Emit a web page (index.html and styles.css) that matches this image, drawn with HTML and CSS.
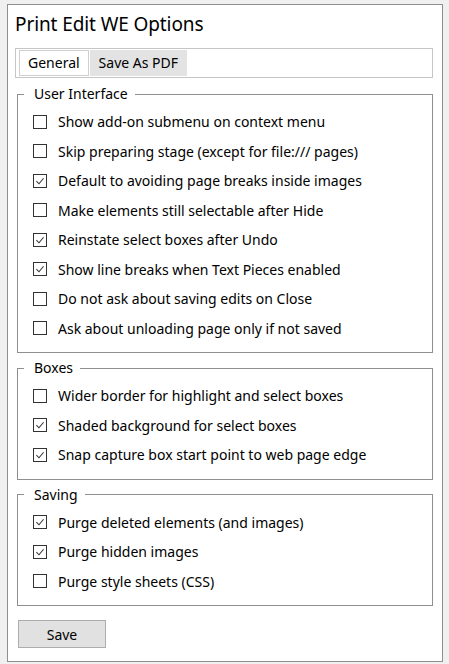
FILE: index.html
```html
<!DOCTYPE html>
<html>
<head>
<meta charset="utf-8">
<title>Print Edit WE Options</title>
<link rel="stylesheet" href="styles.css">
</head>
<body>
<div class="panel">
  <h1 class="title">Print Edit WE Options</h1>
  <div class="tabbar">
    <div class="tab tab-active">General</div>
    <div class="tab">Save As PDF</div>
  </div>

  <fieldset class="group group-first">
    <legend class="legend">User Interface</legend>
    <div class="row"><span class="cb"></span><span class="label">Show add-on submenu on context menu</span></div>
    <div class="row"><span class="cb"></span><span class="label">Skip preparing stage (except for file:/// pages)</span></div>
    <div class="row"><span class="cb"><svg viewBox="0 0 14 14"><path d="M2.8 7.2 L5.8 10.2 L11.2 3.8"/></svg></span><span class="label">Default to avoiding page breaks inside images</span></div>
    <div class="row"><span class="cb"></span><span class="label">Make elements still selectable after Hide</span></div>
    <div class="row"><span class="cb"><svg viewBox="0 0 14 14"><path d="M2.8 7.2 L5.8 10.2 L11.2 3.8"/></svg></span><span class="label">Reinstate select boxes after Undo</span></div>
    <div class="row"><span class="cb"><svg viewBox="0 0 14 14"><path d="M2.8 7.2 L5.8 10.2 L11.2 3.8"/></svg></span><span class="label">Show line breaks when Text Pieces enabled</span></div>
    <div class="row"><span class="cb"></span><span class="label">Do not ask about saving edits on Close</span></div>
    <div class="row"><span class="cb"></span><span class="label">Ask about unloading page only if not saved</span></div>
  </fieldset>

  <fieldset class="group">
    <legend class="legend">Boxes</legend>
    <div class="row"><span class="cb"></span><span class="label">Wider border for highlight and select boxes</span></div>
    <div class="row"><span class="cb"><svg viewBox="0 0 14 14"><path d="M2.8 7.2 L5.8 10.2 L11.2 3.8"/></svg></span><span class="label">Shaded background for select boxes</span></div>
    <div class="row"><span class="cb"><svg viewBox="0 0 14 14"><path d="M2.8 7.2 L5.8 10.2 L11.2 3.8"/></svg></span><span class="label">Snap capture box start point to web page edge</span></div>
  </fieldset>

  <fieldset class="group">
    <legend class="legend">Saving</legend>
    <div class="row"><span class="cb"><svg viewBox="0 0 14 14"><path d="M2.8 7.2 L5.8 10.2 L11.2 3.8"/></svg></span><span class="label">Purge deleted elements (and images)</span></div>
    <div class="row"><span class="cb"><svg viewBox="0 0 14 14"><path d="M2.8 7.2 L5.8 10.2 L11.2 3.8"/></svg></span><span class="label">Purge hidden images</span></div>
    <div class="row"><span class="cb"></span><span class="label">Purge style sheets (CSS)</span></div>
  </fieldset>

  <button class="save" type="button">Save</button>
</div>
</body>
</html>
```

FILE: styles.css
```css
html, body {
  margin: 0;
  padding: 0;
}
body {
  background: #f0f0f0;
  font-family: "Noto Sans", "Open Sans", sans-serif;
  color: #000;
  font-size: 14px;
}
.panel {
  box-sizing: border-box;
  margin: 4px 0 0 7px;
  width: 436px;
  height: 658px;
  border: 1px solid #8f8f8f;
  background: #fff;
  padding: 5px 9px 0 7px;
}
.title {
  margin: 0;
  font-size: 19px;
  font-weight: normal;
  line-height: 28px;
  height: 28px;
  letter-spacing: -0.1px;
}
.tabbar {
  box-sizing: border-box;
  margin-top: 10px;
  height: 30px;
  border: 1px solid #c6c6c6;
  padding: 1px 3px;
  display: flex;
  gap: 1px;
}
.tab {
  box-sizing: border-box;
  height: 26px;
  line-height: 24px;
  padding: 0 8px;
  border: 1px solid #e3e3e3;
  background: #e3e3e3;
  font-size: 14px;
}
.tab-active {
  background: #fff;
  border-color: #cfcfcf;
}
.group {
  margin: 5px 0 0 2px;
  border: 1px solid #8f8f8f;
  padding: 3px 0 9px 6px;
  min-width: 0;
}
.group-first {
  margin-top: 6px;
}
.legend {
  padding: 0 7px 0 10px;
  line-height: 20px;
  font-size: 14px;
}
.row {
  height: 29.5px;
  display: flex;
  align-items: center;
  padding-left: 9px;
}
.cb {
  box-sizing: border-box;
  width: 14px;
  height: 14px;
  border: 1px solid #333;
  background: #fff;
  margin-right: 11px;
  flex: none;
  display: flex;
}
.cb svg {
  width: 12px;
  height: 12px;
  fill: none;
  stroke: #333;
  stroke-width: 1.2;
}
.label {
  white-space: nowrap;
}
.save {
  box-sizing: border-box;
  margin: 14px 0 0 3px;
  width: 88px;
  height: 28px;
  border: 1px solid #adadad;
  background: #e1e1e1;
  font-family: "Noto Sans", "Open Sans", sans-serif;
  font-size: 14px;
  color: #000;
  padding: 0;
}
```
